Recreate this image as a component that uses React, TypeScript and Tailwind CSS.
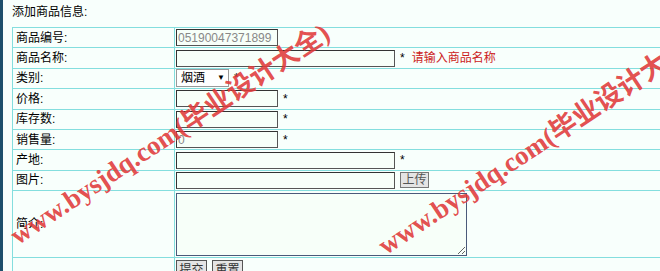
import React from 'react';

const rows: { label: string; kind: string }[] = [
  { label: '商品编号:', kind: 'code' },
  { label: '商品名称:', kind: 'name' },
  { label: '类别:', kind: 'select' },
  { label: '价格:', kind: 'short' },
  { label: '库存数:', kind: 'short' },
  { label: '销售量:', kind: 'sales' },
  { label: '产地:', kind: 'long' },
  { label: '图片:', kind: 'upload' },
];

const Star = () => <span className="ml-[5px] text-black">*</span>;

const inputCls =
  'h-[17px] border border-[#555] border-t-[#333] border-l-[#333] bg-[#f7fff9] px-[1px] text-[12px] leading-[15px] outline-none';

const App: React.FC = () => {
  const renderField = (kind: string) => {
    switch (kind) {
      case 'code':
        return <input className={`${inputCls} w-[102px] text-[#888]`} defaultValue="05190047371899" readOnly />;
      case 'name':
        return (
          <div className="flex items-center">
            <input className={`${inputCls} w-[219px]`} />
            <Star />
            <span className="ml-[7px] text-[#cc2222]">请输入商品名称</span>
          </div>
        );
      case 'select':
        return (
          <div className="flex items-center">
            <div className="flex h-[18px] w-[53px] items-center justify-between border border-[#999] bg-white pl-[4px] pr-[3px]">
              <span>烟酒</span>
              <span className="text-[8px]">▼</span>
            </div>
            <Star />
          </div>
        );
      case 'short':
        return (
          <div className="flex items-center">
            <input className={`${inputCls} w-[102px]`} />
            <Star />
          </div>
        );
      case 'sales':
        return (
          <div className="flex items-center">
            <input className={`${inputCls} w-[102px] text-[#888]`} defaultValue="0" />
            <Star />
          </div>
        );
      case 'long':
        return (
          <div className="flex items-center">
            <input className={`${inputCls} w-[219px]`} />
            <Star />
          </div>
        );
      case 'upload':
        return (
          <div className="flex items-center">
            <input className={`${inputCls} w-[219px]`} />
            <button className="ml-[5px] h-[16px] w-[29px] border border-[#777] bg-[#e4e4e4] text-[12px] leading-[12px] text-[#555]">
              上传
            </button>
          </div>
        );
      default:
        return null;
    }
  };

  const wm = 'pointer-events-none absolute origin-left -rotate-[33.5deg] whitespace-nowrap text-[27px] font-bold text-[#e03a3a]/90';
  const wmFont = { fontFamily: '"Liberation Serif", "Noto Sans CJK SC", serif' };

  return (
    <div
      className="relative h-[271px] w-[660px] overflow-hidden border-l-[3px] border-[#1d4f6b] bg-[#f8fffc] text-[12px] text-black"
      style={{ fontFamily: '"Liberation Sans", "Noto Sans CJK SC", sans-serif' }}
    >
      <div className="pl-[9px] pt-[4px] leading-[16px]">添加商品信息:</div>
      <table className="ml-[9px] mt-[7px] w-[700px] border-collapse">
        <tbody>
          {rows.map((r) => (
            <tr key={r.label}>
              <td className="h-[20.4px] w-[162px] border border-[#84dede] pl-[3px] leading-[14px]">{r.label}</td>
              <td className="h-[20.4px] border border-[#84dede] pl-[1px] py-0">{renderField(r.kind)}</td>
            </tr>
          ))}
          <tr>
            <td className="h-[67px] border border-[#84dede] pl-[3px]">简介:</td>
            <td className="h-[67px] border border-[#84dede] pl-[1px]">
              <textarea className="block h-[63px] w-[291px] resize border border-[#4a5a7a] bg-[#f7fff9] outline-none" />
            </td>
          </tr>
          <tr>
            <td className="h-[22px] border border-[#84dede]"></td>
            <td className="h-[22px] border border-[#84dede] pl-[1px] align-top pt-[2px]">
              <div className="flex gap-[5px]">
                <button className="h-[18px] w-[31px] border border-[#555] bg-[#e4e4e4] text-[12px] text-[#333]">提交</button>
                <button className="h-[18px] w-[31px] border border-[#555] bg-[#e4e4e4] text-[12px] text-[#333]">重置</button>
              </div>
            </td>
          </tr>
        </tbody>
      </table>

      {/* watermark */}
      <div className={`${wm} left-[10px] top-[218px]`} style={wmFont}>
        www.bysjdq.com(毕业设计大全)
      </div>
      <div className={`${wm} left-[378px] top-[228px]`} style={wmFont}>
        www.bysjdq.com(毕业设计大全)
      </div>
      <div className={`${wm} left-[12px] top-[472px]`} style={wmFont}>
        www.bysjdq.com(毕业设计大全)
      </div>
    </div>
  );
};

export default App;
